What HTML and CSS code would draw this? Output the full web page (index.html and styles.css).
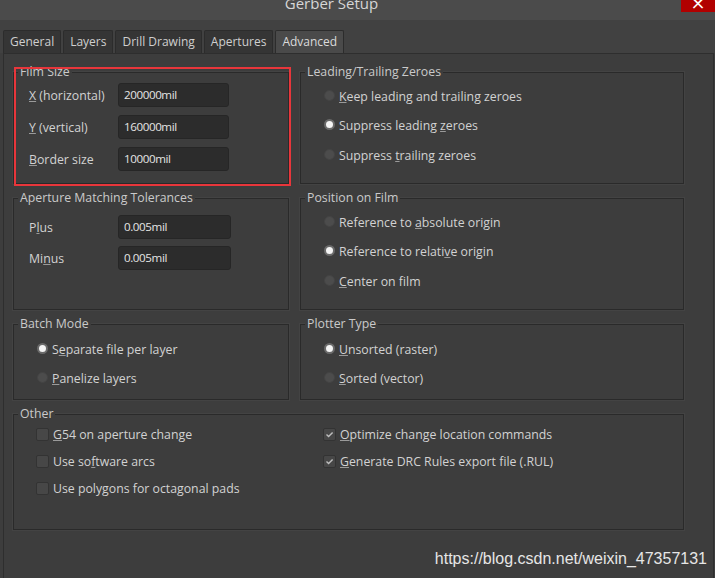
FILE: index.html
```html
<!DOCTYPE html>
<html>
<head>
<meta charset="utf-8">
<link rel="stylesheet" href="styles.css">
</head>
<body>
<div class="window">
  <div class="titlebar">
    <div class="title">Gerber Setup</div>
    <div class="close">×</div>
  </div>
  <div class="tabstrip">
    <div class="tab">General</div>
    <div class="tab">Layers</div>
    <div class="tab">Drill Drawing</div>
    <div class="tab">Apertures</div>
    <div class="tab active">Advanced</div>
  </div>
  <div class="panel">
    <div class="groups">
      <div class="group film">
        <div class="legend">Film Size</div>
        <div class="fields">
          <div class="field"><span class="lbl"><u>X</u> (horizontal)</span><span class="input w111">200000mil</span></div>
          <div class="field"><span class="lbl"><u>Y</u> (vertical)</span><span class="input w111">160000mil</span></div>
          <div class="field"><span class="lbl"><u>B</u>order size</span><span class="input w111">10000mil</span></div>
        </div>
        <div class="redbox"></div>
      </div>
      <div class="group">
        <div class="legend">Leading/Trailing Zeroes</div>
        <div class="options">
          <div class="opt"><span class="radio"></span><span><u>K</u>eep leading and trailing zeroes</span></div>
          <div class="opt"><span class="radio on"></span><span>Suppress leading <u>z</u>eroes</span></div>
          <div class="opt"><span class="radio"></span><span>Suppress <u>t</u>railing zeroes</span></div>
        </div>
      </div>
      <div class="group">
        <div class="legend">Aperture Matching Tolerances</div>
        <div class="fields tol">
          <div class="field"><span class="lbl">P<u>l</u>us</span><span class="input w113">0.005mil</span></div>
          <div class="field"><span class="lbl">Mi<u>n</u>us</span><span class="input w113">0.005mil</span></div>
        </div>
      </div>
      <div class="group">
        <div class="legend">Position on Film</div>
        <div class="options">
          <div class="opt"><span class="radio"></span><span>Reference to <u>a</u>bsolute origin</span></div>
          <div class="opt"><span class="radio on"></span><span>Reference to relati<u>v</u>e origin</span></div>
          <div class="opt"><span class="radio"></span><span><u>C</u>enter on film</span></div>
        </div>
      </div>
      <div class="group">
        <div class="legend">Batch Mode</div>
        <div class="options low">
          <div class="opt"><span class="radio on"></span><span>S<u>e</u>parate file per layer</span></div>
          <div class="opt"><span class="radio"></span><span><u>P</u>anelize layers</span></div>
        </div>
      </div>
      <div class="group">
        <div class="legend">Plotter Type</div>
        <div class="options low">
          <div class="opt"><span class="radio on"></span><span><u>U</u>nsorted (raster)</span></div>
          <div class="opt"><span class="radio"></span><span><u>S</u>orted (vector)</span></div>
        </div>
      </div>
      <div class="group other">
        <div class="legend">Other</div>
        <div class="checks">
          <div class="col">
            <div class="opt"><span class="check"></span><span><u>G</u>54 on aperture change</span></div>
            <div class="opt"><span class="check"></span><span>Use so<u>f</u>tware arcs</span></div>
            <div class="opt"><span class="check"></span><span>Use polygons for octagonal pads</span></div>
          </div>
          <div class="col">
            <div class="opt"><span class="check on"><svg viewBox="0 0 13 13" width="13" height="13"><path d="M3.5 6.5 L5.6 8.6 L9.6 4.4" fill="none" stroke="#bdbdbd" stroke-width="1.4"/></svg></span><span><u>O</u>ptimize change location commands</span></div>
            <div class="opt"><span class="check on"><svg viewBox="0 0 13 13" width="13" height="13"><path d="M3.5 6.5 L5.6 8.6 L9.6 4.4" fill="none" stroke="#bdbdbd" stroke-width="1.4"/></svg></span><span><u>G</u>enerate DRC Rules export file (.RUL)</span></div>
          </div>
        </div>
      </div>
    </div>
    <div class="watermark">https://blog.csdn.net/weixin_47357131</div>
  </div>
</div>
</body>
</html>
```

FILE: styles.css
```css
* { box-sizing: border-box; }
html, body { margin: 0; padding: 0; }
body {
  width: 715px;
  height: 578px;
  overflow: hidden;
  background: #3d3d3d;
  font-family: "Open Sans", "Noto Sans", sans-serif;
  font-size: 12.3px;
  color: #d2d2d2;
}
.window { width: 715px; height: 578px; display: flex; flex-direction: column; }
.titlebar {
  height: 20px;
  background: #4b4b4b;
  display: flex;
  justify-content: center;
  overflow: hidden;
  position: relative;
  flex: none;
  padding-right: 52px;
}
.title {
  font-size: 15px;
  line-height: 16px;
  margin-top: -5px;
  color: #d6d6d6;
}
.close {
  position: absolute;
  right: 0;
  top: 0;
  width: 34px;
  height: 12px;
  background: #b10000;
  color: #fff;
  font-family: "DejaVu Sans", sans-serif;
  font-size: 18px;
  line-height: 6px;
  text-align: center;
  overflow: hidden;
}
.tabstrip {
  height: 33px;
  background: #414141;
  display: flex;
  align-items: flex-end;
  gap: 2px;
  padding-left: 3px;
  flex: none;
}
.tab {
  height: 23px;
  line-height: 21px;
  padding: 0 6px;
  background: #353535;
  border: 1px solid #2c2c2c;
  border-bottom: none;
  border-radius: 2px 2px 0 0;
  color: #cfcfcf;
  font-size: 12px;
}
.tab.active { background: #4a4a4a; color: #dadada; }
.panel {
  flex: 1;
  margin-left: 3px;
  margin-right: 1px;
  border: 1px solid #2e2e2e;
  border-bottom: none;
  background: #3d3d3d;
  padding: 18px 0 0 9px;
  position: relative;
}
.groups {
  display: grid;
  grid-template-columns: 276px 384px;
  grid-template-rows: 112px 112px 76px 116px;
  column-gap: 11px;
  row-gap: 14px;
}
.group {
  border: 1px solid #2a2a2a;
  box-shadow: 0 0 0 1px rgba(255,255,255,0.03);
  position: relative;
}
.group.other { grid-column: 1 / 3; }
.legend {
  display: table;
  margin: -8px 0 0 4px;
  padding: 0 2px;
  line-height: 14px;
  background: #3d3d3d;
  color: #cacaca;
}
.fields { display: flex; flex-direction: column; gap: 8px; padding: 4px 0 0 15px; }
.fields.tol { padding-top: 10px; gap: 7px; }
.field { display: flex; align-items: center; height: 24px; }
.lbl { width: 89px; flex: none; }
.input {
  height: 24px;
  line-height: 22px;
  background: #2c2c2c;
  border: 1px solid #262626;
  border-radius: 3px;
  padding-left: 5px;
  color: #e4e4e4;
  font-size: 11.6px;
  letter-spacing: -0.4px;
}
.w111 { width: 111px; }
.w113 { width: 113px; }
.redbox {
  position: absolute;
  left: 0;
  top: -6px;
  right: -3px;
  bottom: -3px;
  border: 2px solid #e8363b;
  pointer-events: none;
}
u { text-decoration-color: #9a9a9a; text-underline-offset: 1px; }
.options { display: flex; flex-direction: column; gap: 9.5px; padding: 7px 0 0 23px; }
.options.low { padding-top: 8px; }
.opt { display: flex; align-items: center; height: 20px; white-space: nowrap; }
.radio {
  width: 11px;
  height: 11px;
  border-radius: 50%;
  background: #4c4c4c;
  border: 1px solid #444;
  margin: -2px 4px 0 0;
  flex: none;
}
.radio.on {
  background: #f4f4f4;
  border: 2px solid #6a6a6a;
}
.checks {
  display: grid;
  grid-template-columns: 287px 1fr;
  padding: 4px 0 0 22px;
}
.col { display: flex; flex-direction: column; gap: 9px; }
.col .opt { height: 18px; }
.check {
  width: 13px;
  height: 13px;
  border-radius: 2px;
  background: #474747;
  border: 1px solid #333;
  margin-right: 4px;
  flex: none;
  display: flex;
}
.check svg { margin: -1px; }
.watermark {
  position: absolute;
  right: 6px;
  bottom: 10px;
  font-family: "Liberation Sans", Arial, sans-serif;
  font-size: 16px;
  color: #e6e6e6;
}
```
